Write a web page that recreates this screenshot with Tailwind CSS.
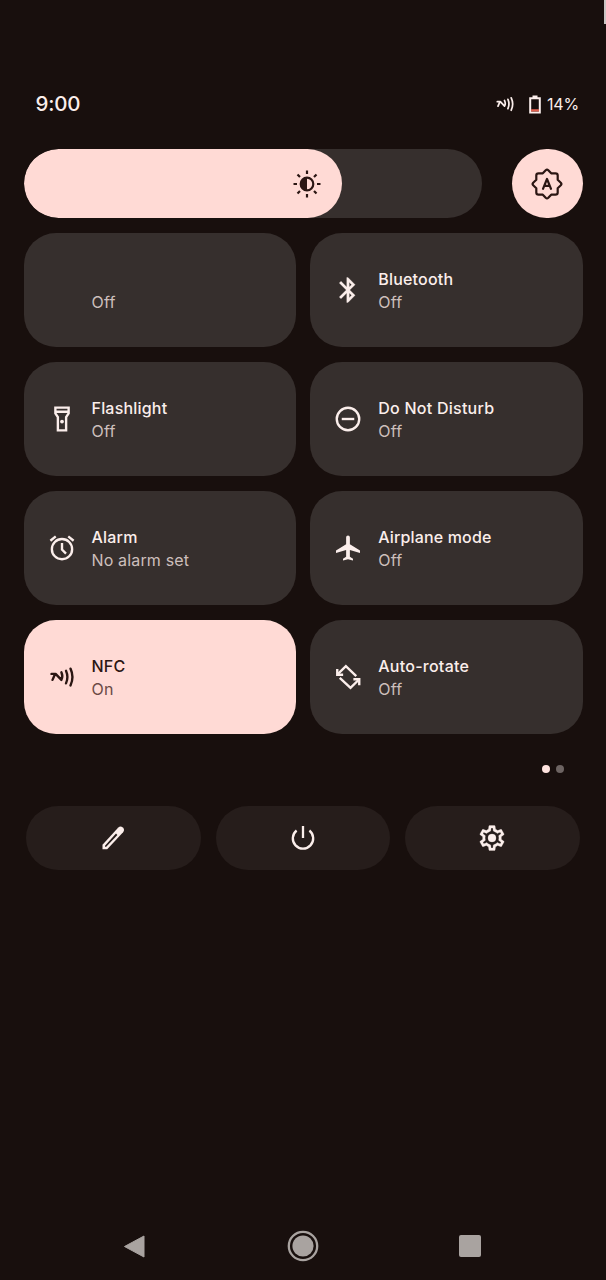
<!DOCTYPE html>
<html lang="en">
<head>
<meta charset="utf-8">
<title>Quick settings</title>
<script src="https://cdn.jsdelivr.net/npm/@tailwindcss/browser@4"></script>
</head>
<body class="bg-[#180f0d]">
<svg class="hidden">
  <symbol id="nfc" viewBox="0 0 24 24"><path d="M3.600 9.500H6.900L11.500 14.300C12.500 12.500 12.500 10.300 11.500 8.200M6.300 10L4.400 14.300M15.200 7c1.400 3.200 1.400 7 0 10.100M18.800 5.300c2 4.300 2 9.200 0 13.500" fill="none" stroke="currentColor" stroke-width="1.900" stroke-linecap="round" stroke-linejoin="round"/></symbol>
</svg>
<div class="relative flex h-[1280px] w-[606px] flex-col overflow-hidden bg-[#180f0d] pt-[88px] font-['Inter',sans-serif] text-[#fbeeeb]">
  <div class="absolute right-0 top-0 h-6 w-[2px] bg-[#c9c5c4]"></div>

  <header class="flex h-8 items-center pr-[27px] pl-[35.500px]">
    <span class="text-[20.500px] font-medium tracking-[-0.200px]">9:00</span>
    <svg class="ml-auto size-[22px]"><use href="#nfc"/></svg>
    <svg class="mr-[6px] ml-[13px] h-[19px] w-3" viewBox="0 0 12 19"><path d="M3.500.500h5v2.500h-5z" fill="#fbeeeb"/><path d="M1.200 3.200h9.600v14.200H1.200z" fill="none" stroke="#fbeeeb" stroke-width="2"/><path d="M2 14.200h8v2.300H2z" fill="#e2604f"/></svg>
    <span class="text-[16px] tracking-[-0.200px]">14%</span>
  </header>

  <div class="mt-[29px] flex h-[69px] items-center justify-between pr-[23.500px] pl-[23.500px]">
    <div class="h-full w-[458.500px] overflow-hidden rounded-full bg-[#362f2d]">
      <div class="flex h-full w-[318.500px] items-center justify-end rounded-full bg-[#ffdad5] pr-[20.500px] text-[#2b1613]">
        <svg class="size-[30px]" viewBox="0 0 30 30" fill="none" stroke="currentColor" stroke-width="2.200"><circle cx="15" cy="15" r="6.300"/><path d="M15 8.700a6.300 6.300 0 0 0 0 12.600z" fill="currentColor" stroke="none"/><path d="M15 1.500v3.500M15 25v3.500M1.500 15H5M25 15h3.500M5.500 5.500l2.500 2.500M22 22l2.500 2.500M24.500 5.500L22 8M8 22l-2.500 2.500"/></svg>
      </div>
    </div>
    <div class="flex h-[69px] w-[70.500px] items-center justify-center rounded-full bg-[#ffdad5] text-[#2b1613]">
      <svg class="size-[34px]" viewBox="0 0 34 34" fill="none" stroke="currentColor" stroke-width="2.200" stroke-linejoin="round" stroke-linecap="round"><path d="M15.700 3.200Q17 2 18.300 3.200L21.200 6.300H25.500Q27.700 6.300 27.700 8.500V12.800L30.800 15.700Q32 17 30.800 18.300L27.700 21.200V25.500Q27.700 27.700 25.500 27.700H21.200L18.300 30.800Q17 32 15.700 30.800L12.800 27.700H8.500Q6.300 27.700 6.300 25.500V21.200L3.200 18.300Q2 17 3.200 15.700L6.300 12.800V8.500Q6.300 6.300 8.500 6.300H12.800Z"/><path d="M13 21.800L17 12L21 21.800M14.300 18.800h5.400"/></svg>
    </div>
  </div>

  <main class="mt-[14.500px] grid grid-cols-2 auto-rows-[114.500px] gap-[14.500px] px-[23.500px] text-[16px] leading-[23px]">
    <section class="flex items-center rounded-[32px] bg-[#362f2d] pl-[68px]">
      <div class="pt-[2px]"><div class="h-[23px]"></div><div class="text-[#cdbfbc] tracking-[0.200px]">Off</div></div>
    </section>
    <section class="flex items-center gap-[15px] rounded-[32px] bg-[#362f2d] pl-[23px]">
      <svg class="size-[30px]" viewBox="0 0 24 24" fill="currentColor" stroke="currentColor" stroke-width=".2"><path d="M17.710 7.710L12 2h-1v7.590L6.410 5 5 6.410 10.590 12 5 17.590 6.410 19 11 14.410V22h1l5.710-5.710-4.300-4.290 4.300-4.290zM13 5.830l1.880 1.880L13 9.590V5.830zm1.880 10.460L13 18.170v-3.760l1.880 1.880z"/></svg>
      <div class="pt-[2px]"><div class="font-medium tracking-[0.200px]">Bluetooth</div><div class="text-[#cdbfbc] tracking-[0.200px]">Off</div></div>
    </section>
    <section class="flex items-center gap-[15px] rounded-[32px] bg-[#362f2d] pl-[23px]">
      <svg class="size-[30px]" viewBox="0 0 24 24" fill="none" stroke="currentColor" stroke-width="1.900"><path d="M6.700 2.900h10.600v4.600l-2 3v10.600H8.700V10.500l-2-3zM6.700 6.200h10.600"/><circle cx="12" cy="14" r="1.500" fill="currentColor" stroke="none"/></svg>
      <div class="pt-[2px]"><div class="font-medium tracking-[0.200px]">Flashlight</div><div class="text-[#cdbfbc] tracking-[0.200px]">Off</div></div>
    </section>
    <section class="flex items-center gap-[15px] rounded-[32px] bg-[#362f2d] pl-[23px]">
      <svg class="size-[30px]" viewBox="0 0 24 24" fill="none" stroke="currentColor" stroke-width="1.900"><circle cx="12" cy="12" r="9"/><path d="M7 12h10"/></svg>
      <div class="pt-[2px]"><div class="font-medium tracking-[0.250px]">Do Not Disturb</div><div class="text-[#cdbfbc] tracking-[0.200px]">Off</div></div>
    </section>
    <section class="flex items-center gap-[15px] rounded-[32px] bg-[#362f2d] pl-[23px]">
      <svg class="size-[30px]" viewBox="0 0 24 24" fill="none" stroke="currentColor" stroke-width="1.900"><circle cx="12" cy="12.900" r="8.100"/><path d="M12 8v5.300l3.200 3.200M2.700 6.200l4.300-3.500M21.300 6.200L17 2.700"/></svg>
      <div class="pt-[2px]"><div class="font-medium tracking-[0.200px]">Alarm</div><div class="text-[#cdbfbc] tracking-[0.150px]">No alarm set</div></div>
    </section>
    <section class="flex items-center gap-[15px] rounded-[32px] bg-[#362f2d] pl-[23px]">
      <svg class="size-[30px]" viewBox="0 0 24 24" fill="currentColor"><path d="M21.600 16v-2L13.500 9V3.500c0-.830-.670-1.500-1.500-1.500s-1.500.670-1.500 1.500V9L2.400 14v2l8.100-2.500V19L8 20.500V22l4-1 4 1v-1.500L13.500 19v-5.500z"/></svg>
      <div class="pt-[2px]"><div class="font-medium tracking-[0.150px]">Airplane mode</div><div class="text-[#cdbfbc] tracking-[0.200px]">Off</div></div>
    </section>
    <section class="flex items-center gap-[15px] rounded-[32px] bg-[#ffdad5] pl-[23px] text-[#2b1613]">
      <svg class="size-[30px]"><use href="#nfc"/></svg>
      <div class="pt-[2px]"><div class="font-medium tracking-[0.200px]">NFC</div><div class="text-[#6b4a46] tracking-[0.200px]">On</div></div>
    </section>
    <section class="flex items-center gap-[15px] rounded-[32px] bg-[#362f2d] pl-[23px]">
      <svg class="size-[30px]" viewBox="0 0 24 24" fill="none" stroke="currentColor" stroke-width="1.900"><path d="M4 9.500L10.300 3.400L18.600 11.300M5.400 12.700L14 20.700L20.200 14.600"/><path d="M3.400 5.500v4.700h4.700M16.300 13.800H21v4.700"/></svg>
      <div class="pt-[2px]"><div class="font-medium tracking-[0.250px]">Auto-rotate</div><div class="text-[#cdbfbc] tracking-[0.200px]">Off</div></div>
    </section>
  </main>

  <div class="mt-[30.500px] flex justify-end gap-[6px] pr-[42px]">
    <div class="size-2 rounded-full bg-[#ffe3df]"></div>
    <div class="size-2 rounded-full bg-[#6d6462]"></div>
  </div>

  <footer class="mt-[33.500px] grid h-16 grid-cols-3 gap-[15px] pr-[26px] pl-[26px]">
    <div class="flex items-center justify-center rounded-full bg-[#261d1b]">
      <svg class="size-[30px]" viewBox="0 0 30 30"><path d="M4.500 26.200v-4.500L20.300 4.500q2.200-2.100 4.500 0t.3 4.800L9.200 26.200z" fill="currentColor"/><path d="M7 23.800v-1.100L18 10.500l1.400 1.400L8.200 23.800z" fill="#261d1b"/></svg>
    </div>
    <div class="flex items-center justify-center rounded-full bg-[#261d1b]">
      <svg class="size-[30px]" viewBox="0 0 30 30" fill="none" stroke="currentColor" stroke-width="2.300"><path d="M15 3v12M8.600 7.500a10.200 10.200 0 1 0 12.800 0"/></svg>
    </div>
    <div class="flex items-center justify-center rounded-full bg-[#261d1b] pr-[1px]">
      <svg class="size-[30px]" viewBox="0 0 24 24" fill="currentColor" stroke="currentColor" stroke-width=".2"><path d="M19.430 12.980c.040-.320.070-.640.070-.980 0-.340-.030-.660-.070-.980l2.110-1.650c.190-.150.240-.420.120-.640l-2-3.460c-.090-.160-.260-.250-.440-.250-.060 0-.120.010-.170.030l-2.490 1c-.520-.400-1.080-.730-1.690-.980l-.380-2.650C14.460 2.180 14.250 2 14 2h-4c-.250 0-.460.180-.490.420l-.380 2.650c-.610.250-1.170.590-1.690.980l-2.490-1c-.060-.020-.120-.030-.180-.030-.170 0-.340.090-.430.250l-2 3.460c-.130.220-.070.490.120.640l2.110 1.650c-.040.320-.070.650-.070.980 0 .330.030.660.070.980l-2.110 1.650c-.190.150-.240.420-.120.640l2 3.460c.090.160.260.250.440.250.060 0 .120-.010.170-.030l2.490-1c.520.400 1.080.730 1.690.980l.380 2.650c.030.240.240.420.490.420h4c.250 0 .460-.180.490-.420l.380-2.650c.610-.250 1.170-.590 1.690-.980l2.490 1c.060.020.120.030.180.030.170 0 .340-.090.430-.250l2-3.460c.120-.220.070-.490-.120-.640l-2.110-1.650zm-1.980-1.710c.040.310.050.520.050.730 0 .210-.020.430-.050.730l-.140 1.130.890.700 1.080.840-.700 1.210-1.270-.510-1.040-.420-.900.680c-.430.320-.840.560-1.250.730l-1.060.430-.160 1.130-.200 1.350h-1.400l-.190-1.350-.160-1.130-1.060-.430c-.430-.180-.830-.410-1.230-.710l-.910-.700-1.060.430-1.270.510-.700-1.210 1.080-.840.890-.700-.140-1.130c-.030-.310-.050-.540-.050-.740s.020-.430.050-.730l.140-1.130-.890-.700-1.080-.840.700-1.210 1.270.510 1.040.420.900-.680c.430-.320.840-.560 1.250-.730l1.060-.430.160-1.130.200-1.350h1.390l.190 1.350.160 1.130 1.060.430c.430.180.830.410 1.230.710l.910.700 1.060-.430 1.270-.510.700 1.210-1.070.850-.890.700.140 1.130z"/><circle cx="12" cy="12" r="3.200"/></svg>
    </div>
  </footer>

  <nav class="mt-auto flex h-[68px] items-center justify-between pr-[125px] pl-[123px] text-[#a9a3a0]">
    <svg class="size-[23px]" viewBox="0 0 23 23"><path d="M1.500 11.500L21 1v21z" fill="currentColor" stroke="currentColor" stroke-linejoin="round"/></svg>
    <svg class="size-8" viewBox="0 0 32 32"><circle cx="16" cy="16" r="14.200" fill="none" stroke="currentColor" stroke-width="2.300"/><circle cx="16" cy="16" r="10.600" fill="currentColor"/></svg>
    <div class="size-[22px] rounded-[2px] bg-[#a9a3a0]"></div>
  </nav>
</div>
</body>
</html>
